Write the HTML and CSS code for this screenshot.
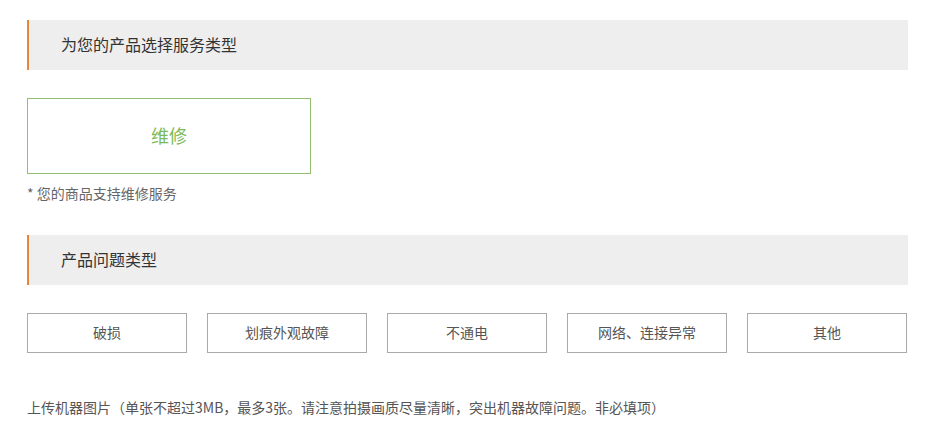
FILE: index.html
```html
<!DOCTYPE html>
<html lang="zh-CN">
<head>
<meta charset="utf-8">
<link rel="stylesheet" href="styles.css">
</head>
<body>
<div class="page">
  <div class="section-title">为您的产品选择服务类型</div>
  <div class="service-row">
    <div class="service-option active">维修</div>
  </div>
  <p class="note">* 您的商品支持维修服务</p>
  <div class="section-title second">产品问题类型</div>
  <div class="problem-row">
    <div class="problem-option">破损</div>
    <div class="problem-option">划痕外观故障</div>
    <div class="problem-option">不通电</div>
    <div class="problem-option">网络、连接异常</div>
    <div class="problem-option">其他</div>
  </div>
  <p class="upload-tip">上传机器图片（单张不超过3MB，最多3张。请注意拍摄画质尽量清晰，突出机器故障问题。非必填项）</p>
</div>
</body>
</html>
```
FILE: styles.css
```css
html, body {
  margin: 0;
  padding: 0;
  background: #fff;
}
body {
  font-family: "Noto Sans CJK SC", "Liberation Sans", sans-serif;
  color: #333;
}
.page {
  width: 881px;
  padding: 20px 0 0 27px;
}
.section-title {
  height: 50px;
  box-sizing: border-box;
  background: #eeeeee;
  border-left: 2px solid #e5873a;
  padding-left: 32px;
  font-size: 16px;
  line-height: 48px;
  color: #333;
}
.section-title.second {
  margin-top: 32px;
}
.service-row {
  margin-top: 28px;
  display: flex;
}
.service-option {
  width: 284px;
  height: 76px;
  box-sizing: border-box;
  border: 1px solid #92c070;
  color: #7cba59;
  font-size: 18px;
  display: flex;
  align-items: center;
  justify-content: center;
  padding-bottom: 3px;
}
.note {
  margin: 9px 0 0;
  font-size: 14px;
  line-height: 20px;
  color: #666;
}
.problem-row {
  margin-top: 28px;
  display: flex;
  gap: 20px;
}
.problem-option {
  width: 160px;
  height: 40px;
  box-sizing: border-box;
  border: 1px solid #aaaaaa;
  font-size: 14px;
  color: #555;
  display: flex;
  align-items: center;
  justify-content: center;
  padding-bottom: 2px;
}
.upload-tip {
  margin: 44px 0 0;
  font-size: 14px;
  line-height: 20px;
  color: #555;
}
```
